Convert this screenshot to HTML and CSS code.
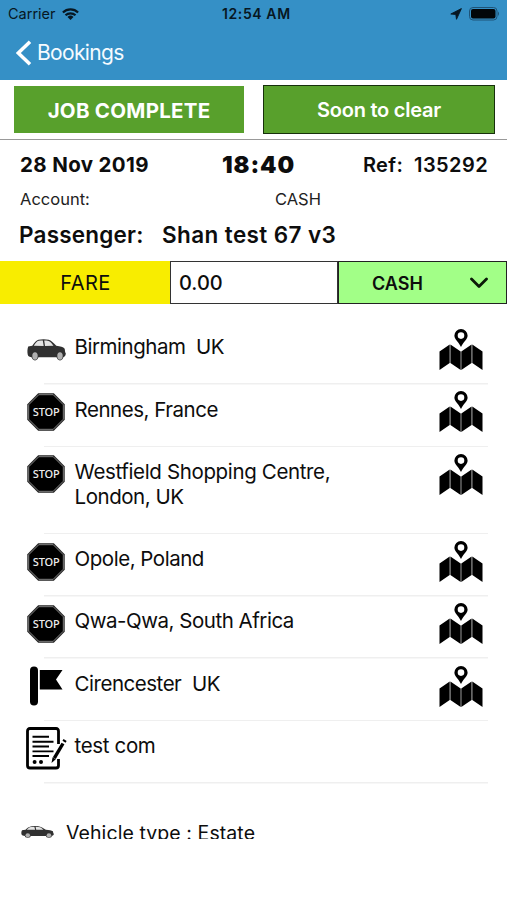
FILE: index.html
```html
<!DOCTYPE html>
<html lang="en">
<head>
<meta charset="utf-8">
<title>Bookings</title>
<link rel="stylesheet" href="styles.css">
</head>
<body>
<svg class="defs" width="0" height="0" aria-hidden="true">
  <symbol id="map" viewBox="0 0 44 42">
    <path fill-rule="evenodd" d="M22 0a6.600 6.600 0 0 1 6.600 6.600c0 3.800-4.200 6.400-6.600 11.400-2.400-5-6.600-7.600-6.600-11.400A6.600 6.600 0 0 1 22 0zM22 3.300a3.300 3.300 0 1 0 0 6.600 3.300 3.300 0 0 0 0-6.600z"/>
    <path d="M.5 22.500L10.700 15.500V34L.5 41zM11.400 15.500L21.700 22.500V41L11.400 34zM22.300 22.500L32.600 15.500V34L22.300 41zM33.300 15.500L43.500 22.500V41L33.300 34z"/>
  </symbol>
  <symbol id="stop" viewBox="0 0 38 38">
    <path d="M11.200.3h15.600l10.900 10.900v15.600L26.800 37.700H11.200L.3 26.800V11.200z" fill="#222"/>
    <path d="M11.800 1.700h14.400l10.100 10.100v14.400L26.200 36.300H11.800L1.700 26.200V11.800z" fill="#000" stroke="#999" stroke-width=".8"/>
    <text class="stop-word" x="19.300" y="23" text-anchor="middle" textLength="27" fill="#eee">STOP</text>
  </symbol>
  <symbol id="car" viewBox="0 0 39 22" preserveAspectRatio="none">
    <path d="M1.200 7.600L5.300 6.700C7.500 3.300 9.300 1.300 11.500.7c3-.7 7-.7 10.200 0 2.300.7 5 3.300 7.600 6.100 4 .4 7 1.300 8.400 3l.5 3.700.6.500c0 2.500-1 4-3 4.200L5 18.200c-2.500 0-4-1-4.300-2.700C.2 13 .3 10 1.200 7.600z" fill="#303030"/>
    <path d="M6.800 6.800c1.500-2.600 3-4.600 5-5 1.300-.3 2.700-.4 4-.4L16.700 7zM17.200 1.400c4-.2 6.500.8 9.300 5.300L18 7z" fill="#e4e4e4"/>
    <ellipse cx="8" cy="16.800" rx="3.600" ry="4.600" fill="#303030"/><ellipse cx="33" cy="16.800" rx="3.600" ry="4.600" fill="#303030"/>
    <ellipse cx="8" cy="17" rx="2.700" ry="3.700" fill="#b0b0b0"/><ellipse cx="33" cy="17" rx="2.700" ry="3.700" fill="#b0b0b0"/>
  </symbol>
</svg>

<header class="header">
  <div class="status">
    <span class="carrier">Carrier</span>
    <svg class="wifi" viewBox="0 0 17 12"><path d="M.9 4.500a11 11 0 0 1 15.200 0M3.500 7.300a7.200 7.200 0 0 1 10 0" fill="none" stroke="#071722" stroke-width="2.200"/><path d="M8.500 12L5.500 9a4.300 4.300 0 0 1 6 0z" fill="#071722"/></svg>
    <span class="clock">12:54 AM</span>
    <svg class="arrow" viewBox="0 0 12 12"><path d="M11.400.6L6.500 11.300 5.800 6.500.8 6z" fill="#071722" stroke="#071722" stroke-width=".9" stroke-linejoin="round"/></svg>
    <svg class="battery" viewBox="0 0 31 14"><rect x=".5" y=".5" width="27.500" height="12.500" rx="3.500" fill="none" stroke="#1e5377"/><rect x="2" y="2" width="24.500" height="9.500" rx="2" fill="#020609"/><path d="M29 4.500q2 2.200 0 4.500z" fill="#1e5377"/></svg>
  </div>
  <nav class="nav">
    <svg class="back" viewBox="0 0 16 26"><path d="M14 1.800L2.300 13 14 24.200" fill="none" stroke="#fff" stroke-width="3.500"/></svg>
    <span class="nav-title">Bookings</span>
  </nav>
</header>

<section class="actions">
  <button class="btn complete"><span>JOB COMPLETE</span></button>
  <button class="btn clear"><span>Soon to clear</span></button>
</section>

<section class="info">
  <div class="line top"><span class="date">28 Nov 2019</span><span class="time">18:40</span><span class="ref">Ref:&nbsp; 135292</span></div>
  <div class="line account"><span class="acc">Account:</span><span class="pay">CASH</span></div>
  <div class="line passenger"><span class="pl">Passenger:</span><span class="pn">Shan test 67 v3</span></div>
</section>

<section class="fare">
  <div class="fare-label"><span>FARE</span></div>
  <div class="fare-value"><span>0.00</span></div>
  <div class="fare-type"><span>CASH</span><svg class="chev" viewBox="0 0 18 12"><path d="M1.500 2L9 9.500 16.500 2" fill="none" stroke="#0b1a08" stroke-width="2.800" stroke-linecap="round" stroke-linejoin="round"/></svg></div>
</section>

<main class="list">
  <div class="row"><svg class="icon i-car"><use href="#car"/></svg><p>Birmingham&nbsp; UK</p><svg class="map"><use href="#map"/></svg></div>
  <div class="row"><svg class="icon i-stop"><use href="#stop"/></svg><p>Rennes, France</p><svg class="map"><use href="#map"/></svg></div>
  <div class="row tall"><svg class="icon i-stop"><use href="#stop"/></svg><p><span class="wide">Westfield Shopping Centre,</span><br>London, UK</p><svg class="map"><use href="#map"/></svg></div>
  <div class="row"><svg class="icon i-stop"><use href="#stop"/></svg><p>Opole, Poland</p><svg class="map"><use href="#map"/></svg></div>
  <div class="row"><svg class="icon i-stop"><use href="#stop"/></svg><p>Qwa-Qwa, South Africa</p><svg class="map"><use href="#map"/></svg></div>
  <div class="row"><svg class="icon i-flag" viewBox="0 0 38 40"><rect x="3" y=".5" width="8" height="39" rx="4"/><path d="M12.800 4H35.500L29 13.500 35.500 23.500H12.800z"/></svg><p>Cirencester&nbsp; UK</p><svg class="map"><use href="#map"/></svg></div>
  <div class="row"><svg class="icon i-note" viewBox="0 0 41 43" fill="none" stroke="#000"><path d="M32.500 17V4q0-2.500-2.500-2.500H4Q1.500 1.500 1.500 4v34.500Q1.500 41 4 41h26q2.500 0 2.500-2.500V32" stroke-width="2.800"/><path d="M6.500 9.800H23M6.500 14.800h21M6.500 19.500H23M6.500 24.400h21M6.500 29H23" stroke-width="1.900"/><circle cx="8.600" cy="35" r="2" fill="#000" stroke="none"/><circle cx="15" cy="35" r="2" fill="#000" stroke="none"/><path d="M37 16.500L28.300 31.200" stroke-width="3.400"/><path d="M26.600 30.200l3.200 2L25.500 36z" fill="#000" stroke="none"/><path d="M38 14.800l1.100-1.800" stroke-width="3.600"/></svg><p><span class="wide">test com</span></p></div>
  <div class="vehicle"><svg class="vcar"><use href="#car"/></svg><span class="vt">Vehicle type : Estate</span></div>
</main>
</body>
</html>
```
FILE: styles.css
```css
* { box-sizing: border-box; }
body { margin: 0; width: 507px; height: 900px; overflow: hidden; background: #fff; color: #0d0d0d; font-family: Inter, "Liberation Sans", sans-serif; }
svg { display: block; flex: none; }
.defs { display: none; }
span { white-space: nowrap; }

.header { height: 79.500px; background: #3590c6; }
.status { display: grid; grid-template-columns: 62px 160px 228px 19px 1fr; align-items: center; height: 27px; color: #071722; font-size: 14px; }
.carrier { padding-left: 8px; font-size: 14.500px; }
.wifi { width: 17px; height: 12px; }
.clock { font-weight: 600; letter-spacing: .6px; }
.arrow { width: 12px; height: 12px; }
.battery { width: 31px; height: 14px; }
.nav { display: flex; align-items: center; gap: 5px; height: 51px; padding-left: 16px; color: #f5fbff; font-size: 21px; letter-spacing: -.65px; }
.back { width: 16px; height: 26px; }

.actions { display: flex; align-items: center; gap: 19px; height: 60px; padding: 0 12px 0 14px; border-bottom: 1px solid #999; }
.btn { padding: 2px 0 0; border: 0; background: #58a02c; color: #fff; font: 600 20px Inter, "Liberation Sans", sans-serif; letter-spacing: -.25px; }
.complete { width: 230px; height: 47px; font-size: 20.500px; font-weight: 700; letter-spacing: .25px; }
.clear { width: 232px; height: 49px; border: 1.500px solid #17300c; }

.info { height: 121.500px; padding: 10px 19px 0 20px; }
.line { display: flex; align-items: center; }
.top { height: 31px; font-size: 20px; }
.date { width: 202px; padding-bottom: 1px; font-size: 20.500px; font-weight: 700; letter-spacing: .35px; }
.time { padding-bottom: 1px; font-weight: 900; font-size: 23.500px; letter-spacing: .9px; }
.ref { margin-left: auto; font-weight: 600; letter-spacing: .4px; }
.account { height: 37px; font-size: 16.500px; color: #222; }
.acc { width: 255px; }
.passenger { height: 34px; font-size: 22.500px; font-weight: 600; letter-spacing: .4px; }
.pl { width: 142px; margin-left: -1px; margin-right: 1px; letter-spacing: .2px; }

.fare { display: grid; grid-template-columns: 170px 168px 169px; height: 43px; font-size: 20px; }
.fare > div { display: flex; align-items: center; }
.fare-label { justify-content: center; padding-left: 1px; background: #f8ed00; letter-spacing: .4px; }
.fare-value { padding-left: 8px; border: 1.500px solid #333; font-weight: 500; }
.fare-type { justify-content: space-between; padding: 1px 18px 0 33px; background: #a2ff87; border: 1.500px solid #222; font-size: 18px; font-weight: 600; }
.chev { width: 18px; height: 12px; }

.list { height: 535px; padding: 18.600px 19px 0 27px; overflow: hidden; font-size: 20.500px; }
.row { display: flex; height: 62.300px; background: linear-gradient(#efefef, #efefef) 17px 100% / 100% 1.500px no-repeat; }
.tall { height: 87.200px; }
.row p { flex: 1; margin: 12.800px 0 0 .6px; line-height: 24.600px; letter-spacing: -.48px; }
.row .wide { letter-spacing: -.36px; }
.icon { margin-right: 8px; }
.i-car { width: 39px; height: 22px; margin-top: 16px; }
.i-stop { width: 38px; height: 38px; margin: 8.200px 9px 0 0; }
.i-flag { width: 38px; height: 40px; margin: 7px 9px 0 0; }
.i-note { width: 41px; height: 43px; margin: 6px 7px 0 -1px; }
.map { width: 44px; height: 42px; margin: 6.600px 5px 0 0; }
.stop-word { font: 500 11px "Noto Sans", sans-serif; }
.vehicle { display: flex; align-items: flex-start; height: 56px; margin-left: -6px; padding-top: 37px; font-size: 19.500px; line-height: 24px; letter-spacing: .08px; }
.vcar { width: 33px; height: 12px; margin: 5.500px 12px 0 0; }
```
